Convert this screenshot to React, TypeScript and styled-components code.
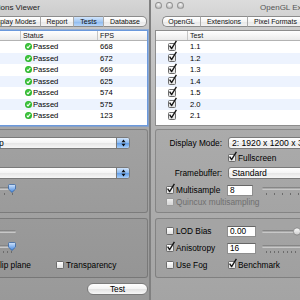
import React from "react";
import styled, { createGlobalStyle, css } from "styled-components";

const GlobalStyle = createGlobalStyle`
  html, body { margin: 0; padding: 0; }
  body {
    background: #a4a4a4;
    font-family: "Liberation Sans", Arial, sans-serif;
    color: #000;
  }
  #root { width: 300px; height: 300px; overflow: hidden; }
`;

const Screen = styled.div`
  display: flex;
  width: 300px;
  height: 300px;
  overflow: hidden;
`;

const Viewport = styled.div<{ $width: number }>`
  flex: none;
  width: ${(p) => p.$width}px;
  height: 300px;
  overflow: hidden;
`;

const WindowFrame = styled.div<{ $offset: number; $active: boolean }>`
  box-sizing: border-box;
  width: 318px;
  height: 300px;
  margin-left: ${(p) => -p.$offset}px;
  border-left: 1px solid #808080;
  border-right: 1px solid #808080;
  display: flex;
  flex-direction: column;
  background: ${(p) =>
    p.$active
      ? "linear-gradient(#d6d6d6 0px, #c4c4c4 30px, #a8a8a8 128px, #999999 300px)"
      : "linear-gradient(#dcdcdc 0px, #cbcbcb 30px, #b2b2b2 128px, #a4a4a4 300px)"};
`;

/* ---------- title bar ---------- */
const TitleBar = styled.div`
  height: 15px;
  display: grid;
  grid-template-columns: 1fr auto 1fr;
  align-items: center;
`;

const Lights = styled.div`
  display: flex;
  gap: 4px;
  padding-left: 4px;
`;

const Light = styled.span<{ $active: boolean; $color: string }>`
  box-sizing: border-box;
  width: 7px;
  height: 7px;
  border-radius: 50%;
  margin-top: -4px;
  border: 1px solid rgba(0, 0, 0, 0.28);
  background: ${(p) =>
    p.$active
      ? `radial-gradient(circle at 50% 30%, #ffffff 0, ${p.$color} 75%)`
      : "radial-gradient(circle at 50% 30%, #f4f4f4 0, #c2c2c2 75%)"};
`;

const Title = styled.div<{ $active: boolean }>`
  font-size: 8px;
  line-height: 15px;
  white-space: nowrap;
  color: ${(p) => (p.$active ? "#222" : "#555")};
`;

/* ---------- tabs ---------- */
const TabBar = styled.div`
  display: flex;
  height: 11px;
  margin: 1px 0 0 11px;
`;

const Tab = styled.div<{ $w: number; $selected: boolean; $first: boolean; $last: boolean }>`
  box-sizing: border-box;
  flex: none;
  width: ${(p) => p.$w}px;
  height: 11px;
  font-size: 7px;
  line-height: 9px;
  text-align: center;
  white-space: nowrap;
  color: #111;
  border: 1px solid #8c8c8c;
  border-left: ${(p) => (p.$first ? "1px solid #8c8c8c" : "1px solid #a9a9a9")};
  ${(p) => !p.$last && css`border-right: none;`}
  border-radius: ${(p) => (p.$first ? "5px 0 0 5px" : p.$last ? "0 5px 5px 0" : "0")};
  background: ${(p) =>
    p.$selected
      ? "linear-gradient(#d2e5fc, #a4c8f2 50%, #8bb8ee 51%, #b9d7f9)"
      : "linear-gradient(#ffffff, #f4f4f4 50%, #e7e7e7 51%, #f3f3f3)"};
`;

/* ---------- table ---------- */
const gridCols = "31px 151px 77px 1fr";

const Table = styled.div<{ $focus: boolean }>`
  box-sizing: border-box;
  height: 96px;
  margin: 3px 1px 0 4px;
  background: #ffffff;
  display: flex;
  flex-direction: column;
  overflow: hidden;
  border: 1px solid ${(p) => (p.$focus ? "#6b99dc" : "#8d8d8d")};
  ${(p) => p.$focus && css`box-shadow: 0 0 0 1px rgba(107, 153, 220, 0.55);`}
`;

const HeaderRow = styled.div`
  box-sizing: border-box;
  height: 10px;
  display: grid;
  grid-template-columns: ${gridCols};
  border-bottom: 1px solid #b3b3b3;
  background: linear-gradient(#ffffff, #ebebeb);
`;

const HeaderCell = styled.div<{ $first?: boolean }>`
  font-size: 7.2px;
  line-height: 9px;
  padding-left: 2px;
  color: #111;
  border-left: ${(p) => (p.$first ? "none" : "1px solid #c6c6c6")};
`;

const BodyRow = styled.div<{ $stripe: boolean }>`
  flex: none;
  height: 11.5px;
  display: grid;
  grid-template-columns: ${gridCols};
  align-items: center;
  background: ${(p) => (p.$stripe ? "#edf3fe" : "#ffffff")};
`;

const Cell = styled.div<{ $center?: boolean; $pad?: number }>`
  display: flex;
  align-items: center;
  gap: 1px;
  justify-content: ${(p) => (p.$center ? "center" : "flex-start")};
  padding-left: ${(p) => p.$pad ?? 0}px;
  font-size: 7.6px;
  line-height: 11px;
  white-space: nowrap;
  color: #000;
`;

/* ---------- form ---------- */
const Group = styled.div<{ $mt: number; $pt: number; $pb: number }>`
  margin: ${(p) => p.$mt}px 1px 0 4px;
  padding: ${(p) => p.$pt}px 0 ${(p) => p.$pb}px;
  border: 1px solid rgba(0, 0, 0, 0.2);
  border-radius: 3px;
  background: rgba(0, 0, 0, 0.035);
  display: flex;
  flex-direction: column;
`;

const Row = styled.div<{ $h: number; $mt?: number; $pl?: number }>`
  display: flex;
  align-items: center;
  height: ${(p) => p.$h}px;
  margin-top: ${(p) => p.$mt ?? 0}px;
  padding-left: ${(p) => p.$pl ?? 0}px;
  font-size: 8.3px;
  white-space: nowrap;
`;

const Label = styled.span`
  flex: none;
  width: 66px;
  margin-right: 6px;
  text-align: right;
  font-size: 8.3px;
`;

const Popup = styled.div<{ $w: number }>`
  flex: none;
  box-sizing: border-box;
  width: ${(p) => p.$w}px;
  height: 12px;
  display: flex;
  align-items: stretch;
  border: 1px solid #7a7a7a;
  border-radius: 3px;
  background: linear-gradient(#ffffff, #f4f4f4 50%, #e6e6e6 51%, #f6f6f6);
  overflow: hidden;
`;

const PopupText = styled.span`
  flex: 1;
  padding-left: 3px;
  font-size: 8.6px;
  line-height: 10px;
  white-space: nowrap;
  overflow: hidden;
`;

const Stepper = styled.span<{ $active: boolean }>`
  flex: none;
  width: 12px;
  display: flex;
  align-items: center;
  justify-content: center;
  border-left: 1px solid #7a7a7a;
  background: ${(p) =>
    p.$active
      ? "linear-gradient(#cfe3fb, #8bbaf0 50%, #5f9ce8 51%, #a9cff8)"
      : "linear-gradient(#ffffff, #efefef 50%, #e0e0e0 51%, #f4f4f4)"};
`;

const CheckField = styled.label<{ $w?: number; $disabled?: boolean }>`
  flex: none;
  display: flex;
  align-items: center;
  gap: 2px;
  width: ${(p) => (p.$w ? `${p.$w}px` : "auto")};
  font-size: 8.3px;
  color: ${(p) => (p.$disabled ? "#6f6f6f" : "#000")};
  white-space: nowrap;
`;

const Box = styled.span<{ $disabled?: boolean }>`
  position: relative;
  flex: none;
  box-sizing: border-box;
  width: 8px;
  height: 8px;
  border-radius: 1.5px;
  border: 1px solid ${(p) => (p.$disabled ? "#9c9c9c" : "#6c6c6c")};
  background: ${(p) =>
    p.$disabled ? "linear-gradient(#eeeeee, #d4d4d4)" : "linear-gradient(#ffffff, #e2e2e2)"};
`;

const TickSvg = styled.svg`
  position: absolute;
  left: -1px;
  top: -4px;
  overflow: visible;
`;

const Field = styled.div<{ $w: number }>`
  flex: none;
  box-sizing: border-box;
  width: ${(p) => p.$w}px;
  height: 11px;
  padding-left: 2px;
  background: #ffffff;
  border: 1px solid #8e8e8e;
  border-top-color: #666;
  font-size: 8.3px;
  line-height: 9px;
`;

const SliderBox = styled.div<{ $w: number; $ml: number }>`
  flex: none;
  width: ${(p) => p.$w}px;
  margin-left: ${(p) => p.$ml}px;
  display: flex;
  flex-direction: column;
`;

const TrackArea = styled.div`
  position: relative;
  height: 8px;
`;

const Track = styled.div`
  position: absolute;
  left: 0;
  right: 0;
  top: 3px;
  height: 3px;
  border-radius: 2px;
  background: linear-gradient(#747474, #b4b4b4 60%, #d6d6d6);
`;

const Knob = styled.svg<{ $pos: number }>`
  position: absolute;
  top: 0;
  left: ${(p) => p.$pos}px;
  overflow: visible;
`;

const Ticks = styled.div`
  display: flex;
  justify-content: space-between;
  height: 4px;
  padding: 1px 3.5px 0;
`;

const TickMark = styled.span`
  width: 1px;
  height: 2px;
  background: #6c6c6c;
`;

const ButtonRow = styled.div`
  display: flex;
  justify-content: flex-end;
  margin: 5px 1px 0 0;
`;

const PushButton = styled.div`
  box-sizing: border-box;
  width: 61px;
  height: 12px;
  border-radius: 6px;
  border: 1px solid #7b7b7b;
  background: linear-gradient(#ffffff, #f3f3f3 50%, #e3e3e3 51%, #f7f7f7);
  font-size: 8.3px;
  display: flex;
  align-items: center;
  justify-content: center;
`;

/* ---------- small drawings ---------- */
function Check({ checked, disabled }: { checked?: boolean; disabled?: boolean }) {
  return (
    <Box $disabled={disabled}>
      {checked && (
        <TickSvg width="10" height="10" viewBox="0 0 10 10">
          <path d="M1.6 5.6 L3.6 8.6 L8.4 0.8" fill="none" stroke="#141414" strokeWidth="1.35" strokeLinejoin="round" />
        </TickSvg>
      )}
    </Box>
  );
}

function PassIcon() {
  return (
    <svg width="7" height="7" viewBox="0 0 7 7">
      <circle cx="3.5" cy="3.5" r="3.5" fill="#2cb52c" />
      <circle cx="3.5" cy="3" r="2.4" fill="#4fd04f" opacity="0.6" />
      <path d="M1.8 3.6 L3 4.9 L5.3 2" fill="none" stroke="#ffffff" strokeWidth="1.1" />
    </svg>
  );
}

function StepArrows() {
  return (
    <svg width="5" height="8" viewBox="0 0 5 8">
      <path d="M0.5 3.2 L2.5 0.6 L4.5 3.2 Z M0.5 4.8 L2.5 7.4 L4.5 4.8 Z" fill="#111" />
    </svg>
  );
}

function Slider({
  width,
  ml,
  value,
  ticks,
  active,
}: {
  width: number;
  ml: number;
  value: number;
  ticks?: number;
  active: boolean;
}) {
  const pos = value * (width - 8);
  const fillTop = active ? "#d3e5fc" : "#ffffff";
  const fillBot = active ? "#3f84de" : "#c9c9c9";
  const stroke = active ? "#2b5c9c" : "#7a7a7a";
  const gid = active ? "knob-a" : "knob-i";
  return (
    <SliderBox $w={width} $ml={ml}>
      <TrackArea>
        <Track />
        <Knob $pos={pos} width="8" height="9" viewBox="0 0 8 9">
          <defs>
            <linearGradient id={gid} x1="0" y1="0" x2="0" y2="1">
              <stop offset="0" stopColor={fillTop} />
              <stop offset="1" stopColor={fillBot} />
            </linearGradient>
          </defs>
          {ticks ? (
            <path
              d="M0.5 1.5 Q0.5 0.5 1.5 0.5 H6.5 Q7.5 0.5 7.5 1.5 V5 L4 8.5 L0.5 5 Z"
              fill={`url(#${gid})`}
              stroke={stroke}
              strokeWidth="0.7"
            />
          ) : (
            <circle cx="4" cy="4.5" r="3.6" fill={`url(#${gid})`} stroke={stroke} strokeWidth="0.7" />
          )}
        </Knob>
      </TrackArea>
      {ticks ? (
        <Ticks>
          {Array.from({ length: ticks }).map((_, i) => (
            <TickMark key={i} />
          ))}
        </Ticks>
      ) : null}
    </SliderBox>
  );
}

/* ---------- data ---------- */
const tabs = [
  { name: "OpenGL", w: 38 },
  { name: "Extensions", w: 47 },
  { name: "Pixel Formats", w: 56 },
  { name: "Display Modes", w: 55 },
  { name: "Report", w: 33 },
  { name: "Tests", w: 30 },
  { name: "Database", w: 44 },
];

const results = [
  ["1.1", "668"],
  ["1.2", "672"],
  ["1.3", "669"],
  ["1.4", "625"],
  ["1.5", "574"],
  ["2.0", "575"],
  ["2.1", "123"],
];

function ViewerWindow({ active, offset }: { active: boolean; offset: number }) {
  return (
    <WindowFrame $offset={offset} $active={active}>
      <TitleBar>
        <Lights>
          <Light $active={active} $color="#e0443e" />
          <Light $active={active} $color="#e2a93a" />
          <Light $active={active} $color="#5fb842" />
        </Lights>
        <Title $active={active}>OpenGL Extensions Viewer</Title>
        <span />
      </TitleBar>

      <TabBar>
        {tabs.map((t, i) => (
          <Tab
            key={t.name}
            $w={t.w}
            $selected={active && t.name === "Tests"}
            $first={i === 0}
            $last={i === tabs.length - 1}
          >
            {t.name}
          </Tab>
        ))}
      </TabBar>

      <Table $focus={active}>
        <HeaderRow>
          <HeaderCell $first />
          <HeaderCell>Test</HeaderCell>
          <HeaderCell>Status</HeaderCell>
          <HeaderCell>FPS</HeaderCell>
        </HeaderRow>
        {results.map(([name, fps], i) => (
          <BodyRow key={name} $stripe={i % 2 === 1}>
            <Cell $center>
              <Check checked />
            </Cell>
            <Cell $pad={3}>{name}</Cell>
            <Cell $pad={5}>
              <PassIcon />
              Passed
            </Cell>
            <Cell $pad={3}>{fps}</Cell>
          </BodyRow>
        ))}
      </Table>

      <Group $mt={3} $pt={7} $pb={6}>
        <Row $h={12}>
          <Label>Display Mode:</Label>
          <Popup $w={220}>
            <PopupText>2: 1920 x 1200 x 32bpp</PopupText>
            <Stepper $active={active}>
              <StepArrows />
            </Stepper>
          </Popup>
        </Row>
        <Row $h={9} $mt={4} $pl={72}>
          <CheckField>
            <Check checked />
            Fullscreen
          </CheckField>
        </Row>
        <Row $h={12} $mt={5}>
          <Label>Framebuffer:</Label>
          <Popup $w={220}>
            <PopupText>Standard</PopupText>
            <Stepper $active={active}>
              <StepArrows />
            </Stepper>
          </Popup>
        </Row>
        <Row $h={10} $mt={6} $pl={10}>
          <CheckField $w={61}>
            <Check checked />
            Multisample
          </CheckField>
          <Field $w={26}>8</Field>
          <Slider width={72} ml={9} value={1} ticks={9} active={active} />
        </Row>
        <Row $h={8} $mt={3} $pl={10}>
          <CheckField $disabled>
            <Check disabled />
            Quincux multisampling
          </CheckField>
        </Row>
      </Group>

      <Group $mt={5} $pt={6} $pb={8}>
        <Row $h={12} $pl={10}>
          <CheckField $w={61}>
            <Check />
            LOD Bias
          </CheckField>
          <Field $w={29}>0.00</Field>
          <Slider width={72} ml={6} value={0.49} active={active} />
        </Row>
        <Row $h={12} $mt={5} $pl={10}>
          <CheckField $w={61}>
            <Check checked />
            Anisotropy
          </CheckField>
          <Field $w={29}>16</Field>
          <Slider width={72} ml={6} value={1} ticks={16} active={active} />
        </Row>
        <Row $h={9} $mt={6} $pl={10}>
          <CheckField $w={62}>
            <Check />
            Use Fog
          </CheckField>
          <CheckField $w={74}>
            <Check checked />
            Benchmark
          </CheckField>
          <CheckField $w={72}>
            <Check />
            Clip plane
          </CheckField>
          <CheckField>
            <Check />
            Transparency
          </CheckField>
        </Row>
      </Group>

      <ButtonRow>
        <PushButton>Test</PushButton>
      </ButtonRow>
    </WindowFrame>
  );
}

export default function App() {
  return (
    <>
      <GlobalStyle />
      <Screen>
        <Viewport $width={150}>
          <ViewerWindow active offset={168} />
        </Viewport>
        <Viewport $width={150}>
          <ViewerWindow active={false} offset={0} />
        </Viewport>
      </Screen>
    </>
  );
}
